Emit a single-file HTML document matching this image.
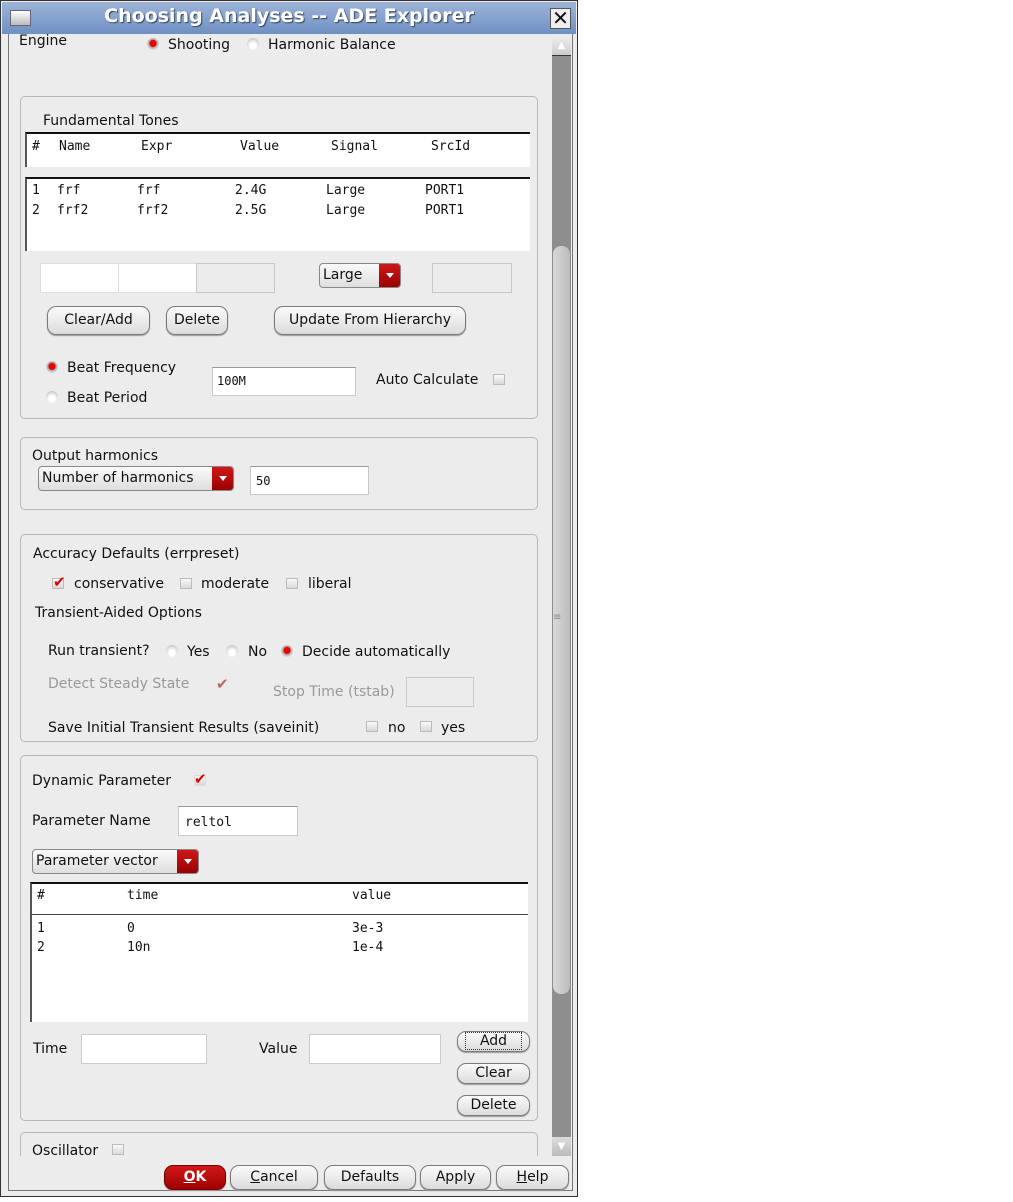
<!DOCTYPE html>
<html><head><meta charset="utf-8"><style>
*{box-sizing:border-box;margin:0;padding:0}
body{width:1013px;height:1202px;background:#fff;position:relative;overflow:hidden;font-family:"DejaVu Sans","Liberation Sans",sans-serif;font-size:14px;color:#111}
.a{position:absolute;white-space:nowrap}
.mono{font-family:"DejaVu Sans Mono","Liberation Mono",monospace;font-size:13px}
.panel{position:absolute;border:1px solid #b8b8b8;border-radius:5px}
.in{position:absolute;background:#fff;border:1px solid #c8c8c8;border-top-color:#999}
.gin{position:absolute;background:#ececec;border:1px solid #c8c8c8}
.btn{position:absolute;border:1px solid #7a7a7a;border-radius:9px;background:linear-gradient(#fafafa,#dcdcdc);text-align:center;line-height:26px;box-shadow:0 1px 1px #999}
.combo{position:absolute;border:1px solid #888;border-radius:4px;background:linear-gradient(#fafafa,#dedede);padding-left:3px;line-height:22px;overflow:hidden}
.combo b{position:absolute;right:0;top:0;width:21px;height:100%;background:linear-gradient(#d01818,#9a0000)}
.combo b:after{content:"";position:absolute;left:7px;top:9px;border:4px solid transparent;border-top:5px solid #fff}
.rad{position:absolute;width:12px;height:12px;border-radius:50%;background:radial-gradient(circle at 50% 65%,#fff 30%,#ddd 60%,#aaa 100%)}
.rad.on{background:radial-gradient(circle at 50% 45%,#e00 35%,#aaa 45%,#eee 80%)}
.cb{position:absolute;width:12px;height:11px;border:1px solid #bbb;background:linear-gradient(#fafafa,#d8d8d8)}
.chk{position:absolute;color:#d00;font-size:15px;font-weight:bold;line-height:12px}
.tbl{position:absolute;background:#fff;border-top:2px solid #111;border-left:2px solid #555}
</style></head><body>
<div class="a" style="left:0;top:0;width:578px;height:1197px;border:1px solid #333;background:#ececec"></div>
<div class="a" style="left:2px;top:2px;width:574px;height:32px;background:linear-gradient(#9db4d8,#6f90c4)"></div>
<div class="a" style="left:10px;top:10px;width:21px;height:16px;background:linear-gradient(#fff,#bbb);border:1px solid #667"></div>
<div class="a" style="left:0;top:5px;width:578px;text-align:center;color:#fff;font-weight:bold;font-size:19px;text-shadow:1px 1px 1px #345">Choosing Analyses -- ADE Explorer</div>
<div class="a" style="left:550px;top:8px;width:21px;height:21px;background:#eee;border:1px solid #555;text-align:center;font-size:20px;line-height:19px;font-weight:bold">✕</div>
<div class="a" style="left:8px;top:34px;width:565px;height:1157px;border:1px solid #777;border-top:none"></div>
<div class="a" style="left:552px;top:36px;width:19px;height:1120px;background:#8e8e8e"></div>
<div class="a" style="left:552px;top:36px;width:19px;height:20px;background:linear-gradient(#eee,#ccc);border-bottom:1px solid #333;color:#fff;font-size:10px;text-align:center;line-height:20px">▲</div>
<div class="a" style="left:553px;top:246px;width:17px;height:748px;background:linear-gradient(90deg,#d8d8d8,#bdbdbd);border-radius:8px"></div>
<div class="a" style="left:553px;top:612px;color:#888;font-size:10px">≡</div>
<div class="a" style="left:552px;top:1137px;width:19px;height:19px;background:linear-gradient(#ddd,#bbb);color:#fff;font-size:10px;text-align:center;line-height:19px">▼</div>

<div class="a" style="left:19px;top:33px">Engine</div>
<div class="rad on" style="left:147px;top:38px"></div><div class="a" style="left:168px;top:37px">Shooting</div>
<div class="rad" style="left:247px;top:38px"></div><div class="a" style="left:268px;top:37px">Harmonic Balance</div>

<div class="panel" style="left:20px;top:96px;width:518px;height:323px"></div>
<div class="a" style="left:43px;top:113px">Fundamental Tones</div>
<div class="tbl" style="left:25px;top:132px;width:505px;height:35px"></div>
<div class="tbl" style="left:25px;top:177px;width:505px;height:74px"></div>
<div class="a mono" style="left:32px;top:139px">#</div><div class="a mono" style="left:59px;top:139px">Name</div><div class="a mono" style="left:141px;top:139px">Expr</div><div class="a mono" style="left:240px;top:139px">Value</div><div class="a mono" style="left:331px;top:139px">Signal</div><div class="a mono" style="left:431px;top:139px">SrcId</div>
<div class="a mono" style="left:32px;top:183px">1</div><div class="a mono" style="left:57px;top:183px">frf</div><div class="a mono" style="left:137px;top:183px">frf</div><div class="a mono" style="left:235px;top:183px">2.4G</div><div class="a mono" style="left:326px;top:183px">Large</div><div class="a mono" style="left:425px;top:183px">PORT1</div>
<div class="a mono" style="left:32px;top:203px">2</div><div class="a mono" style="left:57px;top:203px">frf2</div><div class="a mono" style="left:137px;top:203px">frf2</div><div class="a mono" style="left:235px;top:203px">2.5G</div><div class="a mono" style="left:326px;top:203px">Large</div><div class="a mono" style="left:425px;top:203px">PORT1</div>
<div class="in" style="left:40px;top:263px;width:79px;height:30px;border-color:#ddd"></div>
<div class="in" style="left:118px;top:263px;width:79px;height:30px;border-color:#ddd"></div>
<div class="gin" style="left:196px;top:263px;width:79px;height:30px"></div>
<div class="combo" style="left:319px;top:263px;width:82px;height:25px">Large<b></b></div>
<div class="gin" style="left:432px;top:263px;width:80px;height:30px"></div>
<div class="btn" style="left:47px;top:306px;width:103px;height:29px">Clear/Add</div>
<div class="btn" style="left:166px;top:306px;width:62px;height:29px">Delete</div>
<div class="btn" style="left:274px;top:306px;width:192px;height:29px">Update From Hierarchy</div>
<div class="rad on" style="left:46px;top:361px"></div><div class="a" style="left:67px;top:360px">Beat Frequency</div>
<div class="rad" style="left:46px;top:391px"></div><div class="a" style="left:67px;top:390px">Beat Period</div>
<div class="in" style="left:212px;top:367px;width:144px;height:29px"></div><div class="a mono" style="left:217px;top:374px;font-size:12px">100M</div>
<div class="a" style="left:376px;top:372px">Auto Calculate</div><div class="cb" style="left:493px;top:374px"></div>

<div class="panel" style="left:20px;top:437px;width:518px;height:73px"></div>
<div class="a" style="left:32px;top:448px">Output harmonics</div>
<div class="combo" style="left:38px;top:466px;width:196px;height:25px">Number of harmonics<b></b></div>
<div class="in" style="left:250px;top:466px;width:119px;height:29px"></div><div class="a mono" style="left:256px;top:474px;font-size:12px">50</div>

<div class="panel" style="left:20px;top:534px;width:518px;height:208px"></div>
<div class="a" style="left:33px;top:546px">Accuracy Defaults (errpreset)</div>
<div class="cb" style="left:52px;top:578px"></div><div class="chk" style="left:53px;top:576px">✔</div><div class="a" style="left:74px;top:576px">conservative</div>
<div class="cb" style="left:180px;top:578px"></div><div class="a" style="left:201px;top:576px">moderate</div>
<div class="cb" style="left:286px;top:578px"></div><div class="a" style="left:308px;top:576px">liberal</div>
<div class="a" style="left:35px;top:605px">Transient-Aided Options</div>
<div class="a" style="left:48px;top:643px">Run transient?</div>
<div class="rad" style="left:166px;top:645px"></div><div class="a" style="left:187px;top:644px">Yes</div>
<div class="rad" style="left:226px;top:645px"></div><div class="a" style="left:248px;top:644px">No</div>
<div class="rad on" style="left:281px;top:645px"></div><div class="a" style="left:302px;top:644px">Decide automatically</div>
<div class="a" style="left:48px;top:676px;color:#999">Detect Steady State</div><div class="chk" style="left:216px;top:678px;color:#b66">✔</div>
<div class="a" style="left:273px;top:684px;color:#999">Stop Time (tstab)</div>
<div class="gin" style="left:406px;top:677px;width:68px;height:30px"></div>
<div class="a" style="left:48px;top:720px">Save Initial Transient Results (saveinit)</div>
<div class="cb" style="left:366px;top:721px"></div><div class="a" style="left:388px;top:720px">no</div>
<div class="cb" style="left:420px;top:721px"></div><div class="a" style="left:441px;top:720px">yes</div>

<div class="panel" style="left:20px;top:755px;width:518px;height:366px"></div>
<div class="a" style="left:32px;top:773px">Dynamic Parameter</div><div class="cb" style="left:194px;top:775px;border-color:#ddd"></div><div class="chk" style="left:194px;top:773px">✔</div>
<div class="a" style="left:32px;top:813px">Parameter Name</div>
<div class="in" style="left:178px;top:806px;width:120px;height:30px"></div><div class="a mono" style="left:185px;top:815px">reltol</div>
<div class="combo" style="left:32px;top:849px;width:167px;height:25px">Parameter vector<b></b></div>
<div class="tbl" style="left:30px;top:882px;width:498px;height:34px"></div>
<div class="tbl" style="left:30px;top:914px;width:498px;height:108px;border-top:1px solid #444"></div>
<div class="a mono" style="left:37px;top:888px">#</div><div class="a mono" style="left:127px;top:888px">time</div><div class="a mono" style="left:352px;top:888px">value</div>
<div class="a mono" style="left:37px;top:921px">1</div><div class="a mono" style="left:127px;top:921px">0</div><div class="a mono" style="left:352px;top:921px">3e-3</div>
<div class="a mono" style="left:37px;top:940px">2</div><div class="a mono" style="left:127px;top:940px">10n</div><div class="a mono" style="left:352px;top:940px">1e-4</div>
<div class="a" style="left:33px;top:1041px">Time</div>
<div class="in" style="left:81px;top:1034px;width:126px;height:30px;border-color:#ccc"></div>
<div class="a" style="left:259px;top:1041px">Value</div>
<div class="in" style="left:309px;top:1034px;width:132px;height:30px;border-color:#ccc"></div>
<div class="btn" style="left:457px;top:1031px;width:73px;height:21px;line-height:19px"><span style="border:1px dotted #333;padding:0 14px">Add</span></div>
<div class="btn" style="left:457px;top:1063px;width:73px;height:21px;line-height:19px">Clear</div>
<div class="btn" style="left:457px;top:1095px;width:73px;height:21px;line-height:19px">Delete</div>

<div class="panel" style="left:20px;top:1132px;width:518px;height:24px;border-bottom:none;border-radius:5px 5px 0 0"></div>
<div class="a" style="left:32px;top:1143px">Oscillator</div><div class="cb" style="left:112px;top:1144px"></div>

<div class="btn" style="left:164px;top:1165px;width:62px;height:25px;line-height:23px;background:linear-gradient(#d01818,#a00000);color:#fff;font-weight:bold;border-color:#700"><u>O</u>K</div>
<div class="btn" style="left:230px;top:1165px;width:88px;height:25px;line-height:23px"><u>C</u>ancel</div>
<div class="btn" style="left:324px;top:1165px;width:92px;height:25px;line-height:23px">Defaults</div>
<div class="btn" style="left:420px;top:1165px;width:71px;height:25px;line-height:23px">Apply</div>
<div class="btn" style="left:496px;top:1165px;width:73px;height:25px;line-height:23px"><u>H</u>elp</div>
</body></html>
